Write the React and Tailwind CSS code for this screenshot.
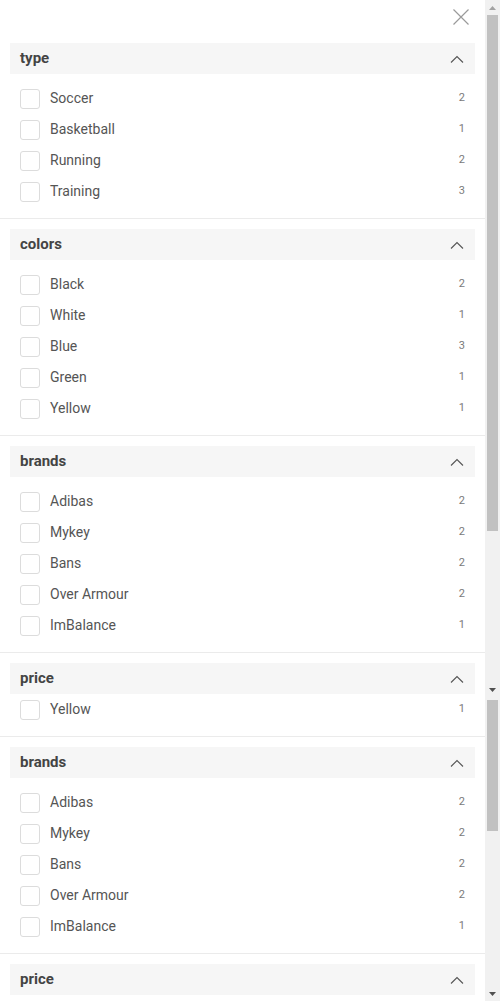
import React from "react";

const sections = {
  type: [
    ["Soccer", 2],
    ["Basketball", 1],
    ["Running", 2],
    ["Training", 3],
  ],
  colors: [
    ["Black", 2],
    ["White", 1],
    ["Blue", 3],
    ["Green", 1],
    ["Yellow", 1],
  ],
  brands: [
    ["Adibas", 2],
    ["Mykey", 2],
    ["Bans", 2],
    ["Over Armour", 2],
    ["ImBalance", 1],
  ],
  price: [
    ["Under $50", 2],
    ["$50 - $100", 3],
    ["$100 - $150", 2],
    ["$150 - $200", 1],
    ["$200+", 1],
    ["Yellow", 1],
  ],
};

function Chevron() {
  return (
    <svg width="14" height="8" viewBox="0 0 14 8" fill="none">
      <polyline points="1,7.5 7,1.5 13,7.5" stroke="#555" strokeWidth="1.1" />
    </svg>
  );
}

function Row({ label, count }) {
  return (
    <div className="flex h-[31px] items-center pl-[20px] pr-[20px]">
      <span className="h-[20px] w-[20px] shrink-0 rounded-[3px] border border-[#dcdcdc] bg-white" />
      <span className="ml-[10px] flex-1 text-[14px] text-[#555]">{label}</span>
      <span className="text-[11px] text-[#7a7a7a]">{count}</span>
    </div>
  );
}

function Section({ title, items }) {
  return (
    <div className="border-b border-[#ebebeb]">
      <div className="mx-[10px] mt-[10px] flex h-[31px] items-center justify-between bg-[#f6f6f6] pl-[10px] pr-[11px]">
        <span className="text-[15px] font-bold text-[#444]">{title}</span>
        <Chevron />
      </div>
      <div className="pb-[11px] pt-[9px]">
        {items.map(([l, c]) => (
          <Row key={l} label={l} count={c} />
        ))}
      </div>
    </div>
  );
}

function ArrowUp({ color }) {
  return (
    <div className="flex h-[15px] items-center justify-center">
      <svg width="7" height="4" viewBox="0 0 7 4">
        <polygon points="0,4 3.5,0 7,4" fill={color} />
      </svg>
    </div>
  );
}

function ArrowDown({ color }) {
  return (
    <div className="flex h-[15px] items-center justify-center">
      <svg width="7" height="4" viewBox="0 0 7 4">
        <polygon points="0,0 7,0 3.5,4" fill={color} />
      </svg>
    </div>
  );
}

export default function App() {
  return (
    <div className="flex flex-col bg-white font-['Roboto',sans-serif]">
      <div className="flex h-[697px]">
        <div className="flex-1 overflow-hidden">
          <div className="flex h-[33px] items-center justify-end pr-[16px]">
            <svg width="16" height="16" viewBox="0 0 16 16" fill="none">
              <path d="M0.5 0.5 L15.5 15.5 M15.5 0.5 L0.5 15.5" stroke="#9a9a9a" strokeWidth="1.2" />
            </svg>
          </div>
          <Section title="type" items={sections.type} />
          <Section title="colors" items={sections.colors} />
          <Section title="brands" items={sections.brands} />
          <Section title="price" items={sections.price} />
        </div>
        <div className="flex w-[15px] flex-col bg-[#f1f1f1]">
          <ArrowUp color="#a3a3a3" />
          <div className="mx-[2px] h-[516px] bg-[#c1c1c1]" />
          <div className="flex-1" />
          <ArrowDown color="#505050" />
        </div>
      </div>
      <div className="flex h-[304px]">
        <div className="flex-1 overflow-hidden">
          <div className="-mt-[3px] border-b border-[#ebebeb] pb-[11px]">
            <Row label="Yellow" count={1} />
          </div>
          <Section title="brands" items={sections.brands} />
          <Section title="price" items={sections.price} />
        </div>
        <div className="flex w-[15px] flex-col bg-[#f1f1f1]">
          <div className="mx-[2px] mt-[3px] h-[131px] bg-[#c1c1c1]" />
          <div className="flex-1" />
          <ArrowDown color="#505050" />
        </div>
      </div>
    </div>
  );
}
